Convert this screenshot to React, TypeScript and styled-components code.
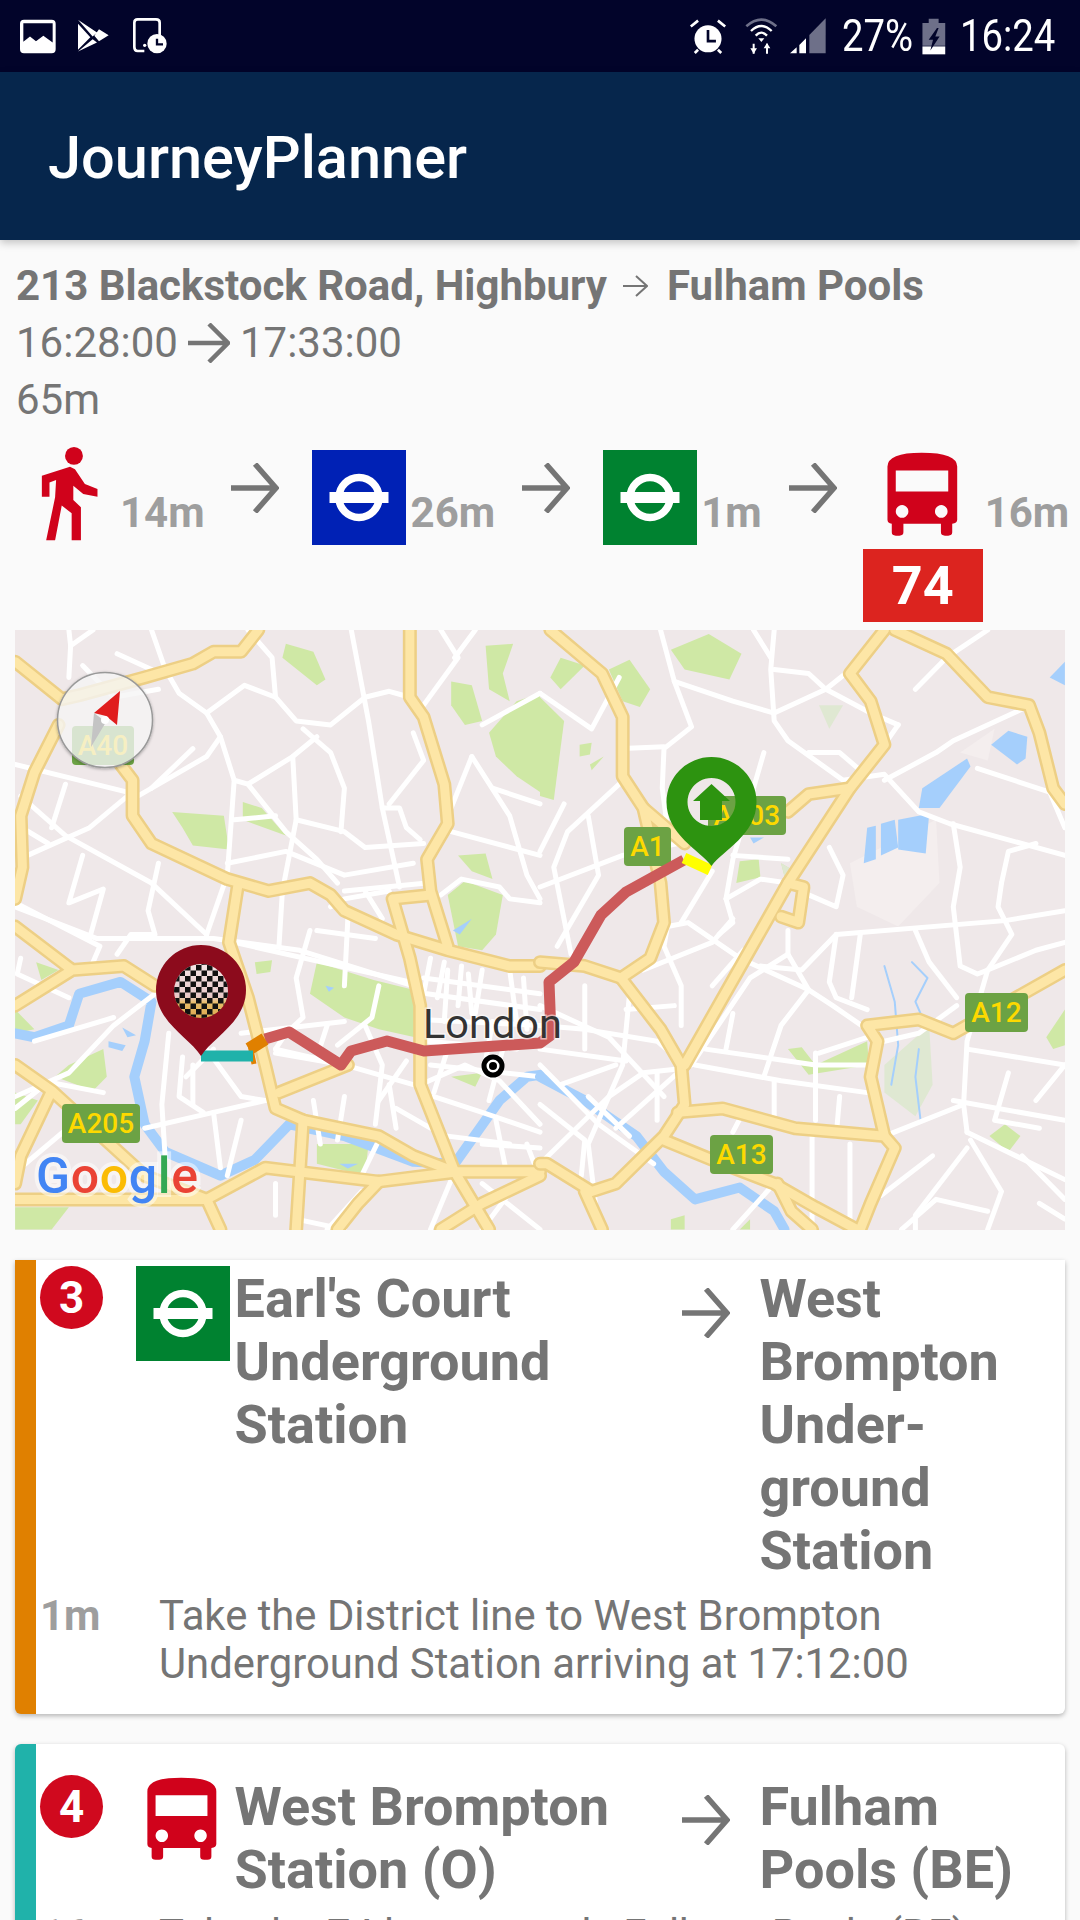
import React from "react";
import styled, { createGlobalStyle } from "styled-components";

const Global = createGlobalStyle`
  html, body { margin: 0; padding: 0; height: 1920px; overflow: hidden; background: #fafafa; }
  body { font-family: Roboto, "Liberation Sans", sans-serif; color: #757575; }
`;

const Screen = styled.div`
  width: 1080px;
  height: 1920px;
  overflow: hidden;
  background: #fafafa;
`;

const StatusBar = styled.div`
  height: 72px;
  background: #02042a;
  display: flex;
  align-items: center;
  justify-content: space-between;
  padding: 0 24px 0 20px;
  box-sizing: border-box;
`;
const StatusGroup = styled.div`
  display: flex;
  align-items: center;
`;
const StatusSvg = styled.svg<{ $ml?: number }>`
  display: block;
  flex: none;
  margin-left: ${(p) => p.$ml ?? 0}px;
`;
const StatusText = styled.span<{ $w: number; $ml: number }>`
  display: inline-block;
  width: ${(p) => p.$w}px;
  margin-left: ${(p) => p.$ml}px;
  color: #fff;
  font-size: 44px;
  line-height: 52px;
  white-space: nowrap;
  transform: scaleX(0.87);
  transform-origin: left center;
`;

const AppBar = styled.header`
  height: 168px;
  padding: 3px 0 0 48px;
  box-sizing: border-box;
  background: #06264c;
  display: flex;
  align-items: center;
  color: #fff;
  font-size: 59.5px;
  font-weight: 500;
  box-shadow: 0 3px 8px rgba(0, 0, 0, 0.22);
  position: relative;
`;

const Summary = styled.section`
  padding: 17px 16px 0;
  height: 206px;
  box-sizing: border-box;
  font-size: 42px;
  line-height: 57px;
`;
const Line = styled.div`
  display: flex;
  align-items: center;
  height: 57px;
  white-space: nowrap;
`;
const RouteName = styled.span`
  font-weight: 700;
  font-size: 42px;
`;
const ArrowSvg = styled.svg<{ $ml?: number; $mr?: number; $mt?: number }>`
  display: block;
  flex: none;
  margin: ${(p) => p.$mt ?? 0}px ${(p) => p.$mr ?? 0}px 0 ${(p) => p.$ml ?? 0}px;
`;

const Legs = styled.div`
  display: flex;
  align-items: flex-start;
  padding-left: 40px;
  height: 184px;
  box-sizing: border-box;
`;
const Leg = styled.div`
  display: flex;
  align-items: flex-start;
  flex: none;
`;
const LegIconColumn = styled.div`
  display: flex;
  flex-direction: column;
  align-items: center;
  width: 120px;
`;
const Duration = styled.span<{ $ml: number }>`
  margin: 41px 0 0 ${(p) => p.$ml}px;
  font-size: 42px;
  line-height: 52px;
  font-weight: 700;
  color: #9e9e9e;
  white-space: nowrap;
`;
const LineBadge = styled.div`
  width: 120px;
  height: 73px;
  margin-top: 11px;
  background: #dc241f;
  color: #fff;
  font-size: 54px;
  font-weight: 700;
  display: flex;
  align-items: center;
  justify-content: center;
`;

const MapFrame = styled.div`
  margin: 0 15px;
  width: 1050px;
  height: 600px;
  overflow: hidden;
  background: #efe8e9;
`;
const MapSvg = styled.svg`
  display: block;
`;

const Card = styled.article<{ $color: string; $flat?: boolean; $pt: number }>`
  margin: 30px 15px 0;
  background: #fff;
  border-left: 21px solid ${(p) => p.$color};
  border-radius: ${(p) => (p.$flat ? "0 0 6px 6px" : "6px")};
  box-shadow: 0 2px 5px rgba(0, 0, 0, 0.28);
  padding: ${(p) => p.$pt}px 0 26px 4px;
`;
const CardHead = styled.div`
  display: grid;
  grid-template-columns: 96px 98.5px 447px 78px 1fr;
  align-items: start;
`;
const Badge = styled.div<{ $mt: number }>`
  width: 63px;
  height: 63px;
  margin-top: ${(p) => p.$mt}px;
  border-radius: 50%;
  background: #d0091e;
  color: #fff;
  font-size: 44px;
  font-weight: 700;
  display: flex;
  align-items: center;
  justify-content: center;
`;
const Title = styled.h2`
  margin: 0;
  font-size: 54px;
  line-height: 63px;
  font-weight: 700;
  color: #757575;
`;
const CardDetail = styled.div`
  display: grid;
  grid-template-columns: 119px 1fr;
  margin-top: 10px;
`;
const DetailTime = styled.span`
  font-size: 42px;
  line-height: 48px;
  font-weight: 700;
  color: #9e9e9e;
`;
const DetailText = styled.p`
  margin: 0;
  font-size: 41.8px;
  line-height: 48px;
  color: #757575;
`;

const Arrow = ({ ml, mr, mt }: { ml?: number; mr?: number; mt?: number }) => (
  <ArrowSvg $ml={ml} $mr={mr} $mt={mt} width={48} height={50} viewBox="0 0 48 50" fill="none" stroke="#757575" strokeWidth={5.5}>
    <path d="M0 25H44M24 1L45 25L24 49" />
  </ArrowSvg>
);

const Roundel = ({ color, mt }: { color: string; mt?: number }) => (
  <ArrowSvg $mt={mt} width={94} height={95} viewBox="0 0 94 95">
    <rect width={94} height={95} fill={color} />
    <circle cx={47} cy={47.5} r={20} fill="none" stroke="#fff" strokeWidth={7.5} />
    <rect x={17.5} y={42} width={59} height={11} fill="#fff" />
  </ArrowSvg>
);

const BusIcon = ({ w, h, ml, mt }: { w: number; h: number; ml?: number; mt?: number }) => (
  <ArrowSvg $ml={ml} $mt={mt} width={w} height={h} viewBox="50 30 225 265">
    <path
      fill="#d0021b"
      fillRule="evenodd"
      d="M57 80Q57 38 160 38Q267 38 267 80V240Q267 250 252 252V278Q252 288 240 288H230Q218 288 218 278V252H105V278Q105 288 93 288H82Q70 288 70 278V252Q57 250 57 240ZM82 92V155H240V92ZM101 196a19 19 0 1 0 .01 0ZM219 196a19 19 0 1 0 .01 0Z"
    />
  </ArrowSvg>
);

const road = (d: string[], stroke: string, w: number) =>
  d.map((p, i) => <path key={i} d={p} fill="none" stroke={stroke} strokeWidth={w} strokeLinejoin="round" strokeLinecap="round" vectorEffect="non-scaling-stroke" />);

const leftParks = [
  "M830 35L910 55L945 125L920 140L820 70Z", "M500 460L650 470L665 555L560 545L530 500Z", "M705 435L760 450L830 520L705 480Z",
  "M1310 130L1370 140L1400 230L1350 240L1310 190Z", "M1410 40L1490 35L1460 110L1480 180L1420 150Z", "M1568 160L1500 180L1420 260L1440 320L1500 370L1568 410Z",
  "M1330 570L1410 565L1430 630L1370 610Z", "M1300 670L1350 635L1460 670L1440 770L1400 810L1330 800Z", "M920 840L1085 885L1200 910L1205 1030L1100 1010L1000 980L900 920Z",
  "M740 840L790 835L785 865L745 870Z", "M105 840L170 860L120 885Z", "M920 1300L1070 1300L1060 1380L920 1350Z", "M44 1460L200 1460L150 1516L44 1516Z",
  "M44 960L100 1010L44 1020Z", "M44 1170L110 1190L60 1250L44 1250Z", "M200 1100L300 1060L310 1130L270 1165L160 1130Z", "M1310 1130L1400 1120L1380 1155Z",
];
const rightParks = [
  "M60 70L130 90L60 150L30 120Z", "M200 100L260 75L320 150L290 195L240 180Z", "M0 170L70 230L40 430L0 420Z", "M380 50L490 10L585 60L550 125L420 100Z",
  "M115 290L150 285L145 315L115 320Z", "M145 340L185 320L150 355Z", "M580 585L635 580L640 625L570 640Z", "M700 590L740 610L715 640Z",
  "M720 1060L760 1055L800 1100L950 1040L955 1100L780 1125Z", "M1305 1280L1350 1250L1395 1280L1360 1320Z", "M1470 1030L1524 960L1524 1050L1490 1060Z",
  "M380 1490L420 1480L420 1516L380 1516Z", "M580 1516L610 1490L610 1516Z",
];
const rightPaleParks = ["M810 190L880 190L840 250Z", "M1000 1100L1130 1000L1140 1150L1090 1230L1000 1170Z", "M700 590L740 610L715 640Z"];
const paleLand = ["M900 590L1150 480L1160 640L1040 750L920 700Z", "M1220 310L1320 250L1300 330Z"];
const rightWaterAreas = [
  "M1110 400L1240 325L1250 345L1160 450L1100 450Z", "M1310 290L1360 255L1415 270L1410 325L1385 340Z", "M950 500L975 495L975 580L940 590Z",
  "M990 490L1030 480L1040 550L990 570Z", "M1040 480L1130 465L1120 565L1040 555Z", "M1480 120L1524 80L1524 140Z", "M610 525L650 525L620 540Z",
];
const leftWaterAreas = ["M315 1040L365 1050L355 1065L315 1055Z", "M355 1005L395 1025L370 1030Z", "M1315 760L1370 730L1335 770Z", "M985 1350L1040 1350L1010 1362Z", "M945 900L970 905L955 915Z"];

const leftYellow = [
  "M44 80L180 175L230 165L420 120L560 85L620 55L700 55L750 0",
  "M170 240L100 360L60 470L65 600L44 680",
  "M350 340L385 380L385 470L440 540L660 630L780 660L900 640L960 670L1000 710L1150 770L1300 810L1480 850L1568 850",
  "M690 650L665 790L720 930L770 1100L800 1210L880 1240L1100 1280L1200 1330L1320 1370",
  "M1190 0L1190 170L1230 220L1290 390L1300 490L1240 580L1250 660L1300 800",
  "M1140 680L1250 670M1140 680L1190 830L1220 950L1220 1150L1320 1370L1420 1516",
  "M44 750L210 860L360 850L450 900M44 950L210 860",
  "M44 1100L150 1165L60 1330L44 1400M150 1165L420 1380L600 1440L640 1516",
  "M44 1440L600 1440L770 1360L1100 1395L1330 1370L1568 1370",
  "M810 1170L1010 1100M880 1240L860 1516M1568 1380L1400 1450L1280 1516M1100 1395L1040 1450L980 1516",
];
const rightYellow = [
  "M30 0L180 110L240 220L240 370L300 450L350 640L360 740L320 830L235 880L130 850L0 840",
  "M235 880L350 1010L410 1100L420 1200L360 1280L220 1400L150 1420L20 1350L0 1350",
  "M360 1290L500 1340L680 1400L800 1460L920 1516",
  "M400 1220L530 1210L740 1260L1000 1280L1030 1310L960 1450L930 1516",
  "M1000 1280L960 1130L980 1040L950 1000L1100 985L1200 1020L1524 860",
  "M420 1100L720 640L900 400L1000 290L960 180L900 110L1000 0",
  "M900 400L780 415L720 460M720 640L765 650L750 740L700 725",
  "M1030 0L1180 60L1300 170L1420 190L1450 260L1490 400L1524 440",
  "M300 450L420 540M130 1420L180 1516M690 1400L730 1470L790 1516",
];
const leftWhite = [
  "M200 0L205 40L200 120M205 40L270 0", "M440 0L480 100L520 160L600 210L640 270L680 380L720 390L830 510L920 580L980 640",
  "M600 210L710 140L800 170L860 230L960 240L1060 170L1130 155L1170 165", "M720 0L790 70L800 170", "M1020 0L1070 230L1110 450L1160 650",
  "M880 250L960 310L1000 400L990 510", "M920 270L850 320L720 390", "M850 320L860 480L820 660", "M680 380L660 620", "M640 270L600 320L400 420L370 420",
  "M370 420L260 500L80 570", "M44 340L370 410", "M60 420L190 520L440 640L600 770", "M190 390L150 500", "M240 570L200 690L300 655L260 780",
  "M460 590L430 710L450 770L380 770L340 820", "M44 700L280 780L620 780L870 810L1200 900", "M680 790L1190 890", "M660 620L600 770",
  "M860 480L1000 510L1060 550L1230 540", "M1110 450L1160 450L1180 500L1220 530", "M660 590L830 560L1000 620L1200 590", "M1000 660L1240 640", "M1060 660L1110 730",
  "M820 660L810 800", "M1130 440L1230 330L1200 260", "M1280 0L1330 70L1230 190", "M1320 70L1380 0", "M1370 320L1310 450", "M1400 240L1568 160",
  "M1370 320L1480 470L1530 620L1568 680", "M1310 510L1568 570", "M1430 400L1568 440", "M1280 670L1340 630L1450 650L1480 680L1568 690",
  "M960 700L1000 680L1130 660", "M900 760L860 880L880 980L830 1020L800 1060", "M800 1060L1000 1100", "M450 920L330 1000L200 1120L44 1180",
  "M490 1020L470 1200L480 1340", "M530 1080L520 1180L590 1220", "M600 1060L700 1180L770 1190", "M420 1260L620 1220L770 1190", "M620 1220L640 1360",
  "M800 1070L1000 1100L1200 1150", "M1060 1000L1110 1100L1090 1250", "M1220 1150L1350 1100L1450 1140L1568 1250", "M1260 1180L1400 1220L1568 1270",
  "M1100 1290L1050 1380", "M800 1400L800 1480", "M860 1490L1000 1516", "M1050 1420L950 1516", "M1320 1370L1250 1516", "M1400 1400L1568 1516", "M1500 1400L1400 1516",
  "M44 690L290 800L270 840", "M60 830L50 870L200 930", "M950 1000L920 1080", "M1100 900L1080 980L980 1050", "M1250 830L1230 920", "M1290 840L1270 930",
  "M1340 850L1330 950", "M1400 860L1380 970", "M1480 860L1500 990", "M1230 880L1568 920", "M1240 920L1568 960", "M1220 985L1568 1000", "M1240 1040L1500 1060", "M1250 1100L1568 1130",
  "M1300 1060L1260 1170", "M1460 1060L1420 1190", "M1180 1090L1100 1190", "M1130 1150L1150 1260", "M120 1140L300 1170", "M560 1100L560 1200", "M1530 1300L1560 1370",
  "M700 1240L660 1380", "M1440 1240L1470 1370", "M1568 1310L1400 1300",
  "M44 1210L130 1150", "M200 1200L340 1290", "M60 1360L210 1250", "M540 1130L620 1060", "M910 1190L930 1300", "M1000 1180L980 1290", "M1150 1210L1250 1260",
  "M1300 1280L1480 1300", "M1520 880L1530 1010", "M1360 870L1370 970", "M1300 860L1290 990", "M1430 990L1410 1090", "M44 490L140 540", "M100 1040L330 980",
  "M560 300L440 400", "M240 90L330 170L460 150", "M340 60L440 100", "M680 480L800 470", "M700 1020L1000 990", "M1010 730L1000 900", "M920 760L1090 780",
];
const rightWhite = [
  "M350 0L390 130L440 245L360 300L355 400L370 500", "M390 130L560 180L680 210L830 150L880 115", "M680 0L670 100L680 230L720 280L880 380L1000 365L1100 460L1190 490L1524 570",
  "M620 0L670 70", "M680 100L780 110L830 150L960 210L1040 240", "M1090 150L1180 70L1300 0", "M1040 240L1000 290", "M780 310L870 310L950 370",
  "M1000 380L1150 310L1200 280L1400 200", "M1270 350L1480 410L1524 500", "M650 310L560 580L540 680L560 740L520 770", "M0 160L150 250L230 120", "M240 300L360 295",
  "M230 390L80 510L40 600L90 820", "M140 470L170 620L50 800", "M0 650L240 570L400 540", "M560 570L720 580", "M540 680L640 630L720 640", "M410 740L500 610",
  "M370 750L430 740L580 830L780 910L850 950L950 1010", "M370 750L360 800L410 900L410 1000", "M300 860L500 790L560 730", "M860 770L1350 735L1524 710",
  "M860 770L760 860L640 850", "M860 770L840 890L860 930L950 960", "M930 770L905 930", "M780 670L860 700L880 620L840 550", "M720 760L720 820L780 910L700 1000L650 1130",
  "M1200 490L1220 600L1200 700L1220 850L1270 870L1300 860", "M1350 735L1370 770L1300 860L1240 1040L1230 1200L1240 1270", "M1340 640L1330 700L1350 735", "M1340 640L1360 560L1440 540",
  "M1090 760L1130 840L1210 930", "M1524 790L1440 810L1300 860", "M1240 1060L1524 1100", "M1200 1190L1524 1240", "M1000 1280L1230 1200", "M1240 1270L1524 1390",
  "M1250 1290L1340 1420L1300 1516", "M1240 1310L1090 1480L1090 1516", "M1000 1040L1100 1020L1210 950", "M810 1070L950 1030", "M450 1100L700 1140L950 1170", "M480 1060L800 1100L950 1100",
  "M800 1070L800 1240", "M790 1270L790 1516", "M680 1140L680 1230", "M0 1000L130 1010L340 1040L420 1100", "M0 1100L170 1250L330 1350", "M130 900L130 1060", "M260 920L240 1100L140 1300L170 1516",
  "M0 1350L200 1180L300 1120L400 1110", "M400 1120L220 1260", "M0 1200L130 1290L120 1380", "M0 950L200 1030L360 1180", "M440 1100L610 880L720 820", "M500 900L590 810", "M900 1300L900 1516",
  "M560 1516L680 1400", "M990 1430L1140 1330", "M1360 1120L1320 1240L1450 1260", "M1450 1450L1524 1490", "M1050 1516L1150 1440L1300 1470", "M560 970L540 1060",
  "M0 560L70 440", "M0 1060L250 1090", "M60 1150L220 1100", "M140 1180L260 1280", "M340 1120L340 1240", "M250 960L390 950", "M1524 1100L1440 1190", "M1400 1330L1524 1440",
  "M870 1180L860 1280", "M590 1220L560 1270",
];

const Shield = ({ x, y, w, label }: { x: number; y: number; w: number; label: string }) => (
  <g>
    <rect x={x} y={y} width={w} height={39} rx={4} fill="#6ca244" />
    <text x={x + w / 2} y={y + 29} textAnchor="middle" fontFamily="Roboto, sans-serif" fontWeight={500} fontSize={28} fill="#fdd900">
      {label}
    </text>
  </g>
);

const logoLetters: [string, string][] = [["G", "#4285f4"], ["o", "#ea4335"], ["o", "#fbbc05"], ["g", "#4285f4"], ["l", "#34a853"], ["e", "#ea4335"]];

const JourneyMap = () => (
  <MapSvg width={1050} height={600} viewBox="15 630 1050 600">
    <defs>
      <linearGradient id="checker" x1="0" y1="0" x2="0" y2="1">
        <stop offset="0" stopColor="#f4e6e6" />
        <stop offset="0.6" stopColor="#e8c8c8" />
        <stop offset="0.72" stopColor="#e8bd68" />
        <stop offset="1" stopColor="#dca850" />
      </linearGradient>
      <pattern id="checks" width="11" height="11" patternUnits="userSpaceOnUse" x="174" y="965">
        <rect width="5.5" height="5.5" fill="#111" />
        <rect x="5.5" y="5.5" width="5.5" height="5.5" fill="#111" />
      </pattern>
      <filter id="compassShadow" x="-20%" y="-20%" width="140%" height="140%">
        <feDropShadow dx="0" dy="1" stdDeviation="1.5" floodColor="#000" floodOpacity="0.35" />
      </filter>
    </defs>
    <rect x={15} y={630} width={1050} height={600} fill="#efe8e9" />
    <g transform="translate(0 630) scale(.3444 .3954)">
      {leftParks.map((d) => <path key={d} d={d} fill="#cfe8a5" />)}
      {leftWaterAreas.map((d) => <path key={d} d={d} fill="#a5cffc" />)}
      {road(["M44 1020L100 1030L200 1000L230 920L350 890L440 940L420 1040L390 1130L420 1250L480 1320L640 1380L740 1340L840 1250L1000 1280L1200 1345L1320 1350L1450 1190L1530 1130L1568 1125"], "#a5cffc", 10)}
      {road(leftWhite, "#ffffff", 5)}
      {road(leftYellow, "#edcf85", 14)}
      {road(leftYellow, "#fde6a6", 9)}
    </g>
    <g transform="translate(540 630) scale(.3444 .3954)">
      {paleLand.map((d) => <path key={d} d={d} fill="#f4eeee" />)}
      {rightParks.map((d) => <path key={d} d={d} fill="#cfe8a5" />)}
      {rightPaleParks.map((d) => <path key={d} d={d} fill="#dfe8d2" />)}
      {rightWaterAreas.map((d) => <path key={d} d={d} fill="#a5cffc" />)}
      {road(["M0 1130L130 1190L280 1280L360 1370L450 1440L580 1410L680 1470L710 1516"], "#a5cffc", 10)}
      {road(["M1000 850L1030 940L1040 1050L1020 1150", "M1100 1060L1090 1130L1105 1240", "M1080 840L1125 880L1090 940L1120 1000"], "#a5cffc", 2)}
      {road(rightWhite, "#ffffff", 5)}
      {road(rightYellow, "#edcf85", 14)}
      {road(rightYellow, "#fde6a6", 9)}
    </g>

    <Shield x={72} y={726} w={62} label="A40" />
    <Shield x={62} y={1104} w={78} label="A205" />
    <Shield x={624} y={827} w={47} label="A1" />
    <Shield x={708} y={796} w={78} label="A103" />
    <Shield x={965} y={993} w={63} label="A12" />
    <Shield x={710} y={1135} w={63} label="A13" />

    <g fill="none" strokeLinejoin="round">
      <path d="M265 1039L289 1032L341 1065L351 1051L387 1041L424 1051L540 1043L551 1035L549 982L574 962L601 915L626 892L684 860" stroke="#cc5a5a" strokeWidth={11} />
      <path d="M249 1049L265 1039" stroke="#e08000" strokeWidth={13} />
      <path d="M250 1045L254 1064" stroke="#e08000" strokeWidth={5} />
      <path d="M201 1056H253" stroke="#20b2aa" strokeWidth={11} />
      <path d="M684 858L710 870" stroke="#ffff00" strokeWidth={11} />
    </g>

    <text x={423} y={1038} fontFamily="Roboto, sans-serif" fontSize={41.5} fill="#333" stroke="#fff" strokeOpacity={0.55} strokeWidth={3} paintOrder="stroke">
      London
    </text>
    <circle cx={493} cy={1066} r={9} fill="#fff" stroke="#000" strokeWidth={5} />
    <circle cx={493} cy={1066} r={4} fill="#000" />

    <path fillRule="evenodd" fill="#2d9310" d="M711.500 866C700 850 666.500 835 666.500 802A45 45 0 1 1 756.500 802C756.500 835 723 850 711.500 866ZM711.500 778a24 24 0 1 0 .01 0Z" />
    <path fill="#2d9310" d="M711.500 784L693 801H700V820H722V801H730Z" />

    <path fill="#8c0b1c" d="M201 1056C190 1038 156 1022 156 990A45 45 0 1 1 246 990C246 1022 212 1038 201 1056Z" />
    <circle cx={201} cy={991} r={27} fill="url(#checker)" />
    <circle cx={201} cy={991} r={27} fill="url(#checks)" />

    <text x={36} y={1193} fontFamily="Roboto, sans-serif" fontWeight={500} fontSize={50} stroke="#fff" strokeOpacity={0.5} strokeWidth={8} paintOrder="stroke" textLength={162}>
      {logoLetters.map(([c, f], i) => <tspan key={i} fill={f}>{c}</tspan>)}
    </text>

    <circle cx={105} cy={720} r={47.500} fill="#fff" fillOpacity={0.72} stroke="#999" strokeWidth={1.5} filter="url(#compassShadow)" />
    <path fill="#e01e1e" d="M120 691L94 713L106 716L117 725Z" />
    <path fill="#c4c4c4" d="M91 747L94 713L106 722Z" />
    <circle cx={105} cy={720} r={4} fill="#fff" />
  </MapSvg>
);

export default function App() {
  return (
    <Screen>
      <Global />
      <StatusBar>
        <StatusGroup>
          <StatusSvg width={36} height={35} viewBox="60 26 108 104">
            <path fill="#fff" fillRule="evenodd" d="M72 28H155Q167 28 167 40V116Q167 128 155 128H72Q60 128 60 116V40Q60 28 72 28ZM70 38V94L90 78L108 92L130 76L158 96V38Z" />
          </StatusSvg>
          <StatusSvg $ml={21} width={32} height={35} viewBox="230 28 96 104">
            <path fill="#fff" d="M233 30L290 68L277 80ZM233 42L270 82L233 120ZM233 125L277 88L290 98ZM296 58L325 76L296 94L282 78Z" />
          </StatusSvg>
          <StatusSvg $ml={24} width={34} height={36} viewBox="396 26 102 108">
            <path d="M430 125H410Q400 125 400 113V40Q400 30 410 30H465Q476 30 476 40V82" fill="none" stroke="#fff" strokeWidth={8} />
            <circle cx={431} cy={108} r={5} fill="#fff" />
            <circle cx={468} cy={103} r={29} fill="#fff" />
            <path d="M468 88V105H486" fill="none" stroke="#02042a" strokeWidth={7} />
          </StatusSvg>
        </StatusGroup>
        <StatusGroup>
          <StatusSvg width={38} height={37} viewBox="25 22 114 112">
            <circle cx={82} cy={85} r={41} fill="#fff" />
            <path d="M30 48L52 30M134 48L112 30M42 128L52 118M122 128L112 118" stroke="#fff" strokeWidth={8} />
            <path d="M82 58V92H106" fill="none" stroke="#02042a" strokeWidth={8} />
          </StatusSvg>
          <StatusSvg $ml={18} width={33} height={38} viewBox="196 18 99 114">
            <path d="M200 46Q245 6 290 46" fill="none" stroke="#6e7089" strokeWidth={8} />
            <path d="M214 60Q245 30 276 60M228 74Q245 56 262 74" fill="none" stroke="#fff" strokeWidth={7} />
            <path d="M236 82H254L245 93Z" fill="#fff" />
            <path d="M222 98V128M262 128V98" stroke="#fff" strokeWidth={6} />
            <path d="M212 112H232L222 128ZM252 112H272L262 96Z" fill="#fff" />
          </StatusSvg>
          <StatusSvg $ml={12} width={36} height={36} viewBox="330 24 108 108">
            <path fill="#fff" d="M330 130L350 112V130ZM358 105L378 85V130H358Z" />
            <path fill="#6e7089" d="M388 75L437 25V130H388Z" />
          </StatusSvg>
          <StatusText $ml={16} $w={80}>27%</StatusText>
          <StatusSvg width={24} height={37} viewBox="725 20 72 112">
            <path fill="#6e7089" d="M745 22H775V35H795V104H726V35H745Z" />
            <path fill="#fff" d="M726 106H795V130H726Z" />
            <path fill="#02042a" d="M770 50L745 86H758L750 118L778 76H765L775 50Z" />
          </StatusSvg>
          <StatusText $ml={14} $w={96}>16:24</StatusText>
        </StatusGroup>
      </StatusBar>
      <AppBar>JourneyPlanner</AppBar>
      <Summary>
        <Line>
          <RouteName>213 Blackstock Road, Highbury</RouteName>
          <ArrowSvg $ml={16} $mr={19} width={25} height={22} viewBox="0 0 25 22" fill="none" stroke="#757575" strokeWidth={2}>
            <path d="M0 11H23M13 1L24 11L13 21" />
          </ArrowSvg>
          <RouteName>Fulham Pools</RouteName>
        </Line>
        <Line>
          16:28:00
          <ArrowSvg $ml={10} $mr={10} width={42} height={40} viewBox="0 0 42 40" fill="none" stroke="#757575" strokeWidth={4.5}>
            <path d="M0 20H39M21 1L40 20L21 39" />
          </ArrowSvg>
          17:33:00
        </Line>
        <Line>65m</Line>
      </Summary>
      <Legs>
        <Leg>
          <StatusSvg width={60} height={96} viewBox="60 15 180 290">
            <circle cx={162} cy={45} r={27} fill="#d0021b" />
            <path fill="#d0021b" d="M65 105L150 78L165 85L195 130L233 145V168L190 160L160 135V178L183 200V300H155V218L125 195L105 300H78L105 170L108 118L88 125V168H65Z" />
          </StatusSvg>
          <Duration $ml={20}>14m</Duration>
        </Leg>
        <Arrow ml={26} mr={33} mt={17} />
        <Leg>
          <Roundel color="#0021b5" mt={4} />
          <Duration $ml={5}>26m</Duration>
        </Leg>
        <Arrow ml={27} mr={33} mt={17} />
        <Leg>
          <Roundel color="#008230" mt={4} />
          <Duration $ml={4}>1m</Duration>
        </Leg>
        <Arrow ml={27} mr={26} mt={17} />
        <Leg>
          <LegIconColumn>
            <BusIcon w={75} h={88} mt={4} />
            <LineBadge>74</LineBadge>
          </LegIconColumn>
          <Duration $ml={2}>16m</Duration>
        </Leg>
      </Legs>
      <MapFrame>
        <JourneyMap />
      </MapFrame>
      <Card $color="#e08000" $flat $pt={7}>
        <CardHead>
          <Badge $mt={-1}>3</Badge>
          <Roundel color="#008230" mt={-1} />
          <Title>Earl's Court<br />Underground<br />Station</Title>
          <Arrow mt={21} />
          <Title>West<br />Brompton<br />Under-<br />ground<br />Station</Title>
        </CardHead>
        <CardDetail>
          <DetailTime>1m</DetailTime>
          <DetailText>Take the District line to West Brompton<br />Underground Station arriving at 17:12:00</DetailText>
        </CardDetail>
      </Card>
      <Card $color="#20b2aa" $pt={31}>
        <CardHead>
          <Badge $mt={0}>4</Badge>
          <BusIcon w={74} h={87} ml={9} mt={0} />
          <Title>West Brompton<br />Station (O)</Title>
          <Arrow mt={20} />
          <Title>Fulham<br />Pools (BE)</Title>
        </CardHead>
        <CardDetail>
          <DetailTime>16m</DetailTime>
          <DetailText>Take the 74 bus towards Fulham Pools (BE)</DetailText>
        </CardDetail>
      </Card>
    </Screen>
  );
}
